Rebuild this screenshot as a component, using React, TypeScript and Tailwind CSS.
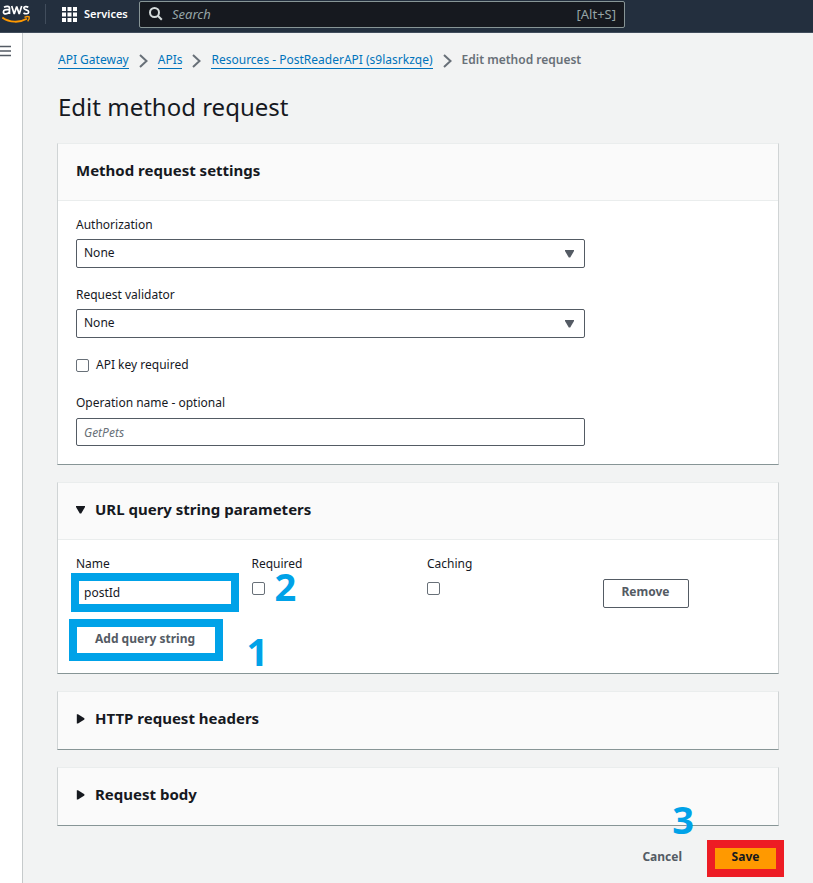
import type { ReactNode } from "react";

const checkbox =
  "block size-[13px] shrink-0 appearance-none rounded-[2px] border border-[#687078] bg-white checked:bg-[#0073bb]";

const annotation =
  "pointer-events-none absolute font-['Open_Sans',sans-serif] text-[38px] leading-[28px] font-bold text-[#00a2e8]";

function Caret({ open, className = "" }: { open: boolean; className?: string }) {
  return (
    <svg viewBox="0 0 10 10" className={`size-[10px] shrink-0 fill-current ${className}`} aria-hidden="true">
      {open ? <path d="M0 1h9v1L5.2 8.6H3.8L0 2z" /> : <path d="M0.8 0.3h1.2l6.4 4v1.2L2 9.6H0.8z" />}
    </svg>
  );
}

function Separator() {
  return (
    <svg viewBox="0 0 9 14" className="mt-[2px] h-[14px] w-[9px] shrink-0" fill="none" stroke="#687078" strokeWidth="2" aria-hidden="true">
      <path d="M1 1l6.5 6-6.5 6" />
    </svg>
  );
}

function Crumb({ children }: { children: ReactNode }) {
  return (
    <a href="#" className="border-b border-[#0073bb] leading-4 text-[#0073bb]">
      {children}
    </a>
  );
}

function Card({ title, open, children }: { title: string; open?: boolean; children?: ReactNode }) {
  return (
    <section className="border border-t-[#eaeded] border-r-[#d0d4d5] border-b-[#879596] border-l-[#d0d4d5] bg-white">
      <header className={`flex h-[57px] items-center bg-[#fafafa] px-[18px] ${children ? "border-b border-[#eaeded] pb-1" : "pb-[6px]"}`}>
        <h2 className="text-[15px] leading-5 font-bold">
          {open === undefined ? (
            title
          ) : (
            <button type="button" aria-expanded={open} className="flex items-center gap-[9px]">
              <Caret open={open} className="mt-[2px]" />
              {title}
            </button>
          )}
        </h2>
      </header>
      {children}
    </section>
  );
}

function SelectField({ id, label }: { id: string; label: string }) {
  return (
    <div>
      <label htmlFor={id} className="block leading-5">
        {label}
      </label>
      <div className="relative mt-1">
        <select id={id} className="block h-[29px] w-full appearance-none rounded-[2px] border border-[#545b64] bg-white px-[7px] pb-[2px]">
          <option>None</option>
        </select>
        <Caret open className="pointer-events-none absolute top-[10px] right-[10px] text-[#545b64]" />
      </div>
    </div>
  );
}

export default function App() {
  return (
    <div className="flex min-h-screen flex-col bg-[#f2f3f3] font-['Noto_Sans',sans-serif] text-[12px] leading-5 text-[#16191f]">
      <header className="flex h-[33px] shrink-0 items-start border-b border-[#414d5c] bg-[#232f3e] text-white">
        <a href="#" aria-label="AWS home" className="ml-[2px] block">
          <svg viewBox="0 0 29 26" className="h-[26px] w-[29px]" fill="none">
            <g stroke="#fff" strokeWidth="1.7">
              <path d="M2 7.2C4.2 6 7.5 5.7 7.5 8.4V14M7.5 9.8C4 9.4 1.4 9.8 1.4 12c0 2.6 4.4 2.4 6.1-.3" />
              <path d="M9.7 6l2.5 8 2.5-7.6L17.2 14 19.7 6" strokeLinejoin="bevel" />
              <path d="M26.3 7.2c-1.4-.8-4.5-.9-4.5.9 0 2.3 4.9 1.3 4.9 3.8 0 2.3-3.5 2.2-5.2 1.1" />
            </g>
            <path d="M.3 17.5c7.2 5.3 17.5 5.4 24.6 1.3" stroke="#ff9900" strokeWidth="1.9" />
            <path d="M22.5 17.3c2-.9 4-.9 4.7-.4.3 1-.3 3.1-1.5 4.5" stroke="#ff9900" strokeWidth="1.4" />
          </svg>
        </a>
        <span className="mt-1 ml-[14px] h-5 w-px bg-[#414d5c]" />
        <button type="button" className="ml-4 flex h-7 w-[63px] items-center gap-[7px] text-[11px] font-semibold">
          <svg viewBox="0 0 15 15" className="size-[15px] shrink-0 fill-white" aria-hidden="true">
            {[0, 5.5, 11].map((y) =>
              [0, 5.5, 11].map((x) => <rect key={`${x}-${y}`} x={x} y={y} width="4" height="4" />),
            )}
          </svg>
          Services
        </button>
        <div className="mt-[1px] ml-[14px] flex h-[27px] w-[486px] items-center rounded-[2px] border border-[#879596] bg-[#16191f] px-2 pb-[2px] text-[13px] text-[#95a5a6]">
          <svg viewBox="0 0 16 16" className="size-4 shrink-0" fill="none" stroke="#d5dbdb" strokeWidth="2" aria-hidden="true">
            <circle cx="6.5" cy="6.5" r="4.5" />
            <path d="M9.8 9.8l4 4" />
          </svg>
          <input type="search" aria-label="Search" placeholder="Search" className="ml-2 min-w-0 flex-1 bg-transparent outline-none placeholder:text-[#95a5a6] placeholder:italic" />
          <span>[Alt+S]</span>
        </div>
      </header>

      <div className="flex flex-1">
        <aside className="w-[23px] shrink-0 border-r border-[#c6cacb] bg-white pt-3">
          <button type="button" aria-label="Open navigation" className="block">
            <svg viewBox="0 0 11 12" className="h-3 w-[11px]" stroke="#545b64" strokeWidth="1.5" aria-hidden="true">
              <path d="M0 1.5h11M0 6h11M0 10.5h11" />
            </svg>
          </button>
        </aside>

        <main className="min-w-0 flex-1 pt-[17px] pr-[34px] pl-[34px]">
          <nav aria-label="Breadcrumbs" className="flex items-center gap-[10px] pl-px">
            <Crumb>API Gateway</Crumb>
            <Separator />
            <Crumb>APIs</Crumb>
            <Separator />
            <Crumb>Resources - PostReaderAPI (s9lasrkzqe)</Crumb>
            <Separator />
            <span className="font-semibold text-[#687078]">Edit method request</span>
          </nav>

          <h1 className="mt-[21px] pl-px text-2xl leading-8">Edit method request</h1>

          <form className="mt-5 flex flex-col gap-[17px]" onSubmit={(event) => event.preventDefault()}>
            <Card title="Method request settings">
              <div className="grid grid-cols-4 gap-[18px] px-[18px] pt-[14px] pb-[18px]">
                <div className="col-span-3">
                  <SelectField id="authorization" label="Authorization" />
                  <div className="mt-[17px]">
                    <SelectField id="validator" label="Request validator" />
                  </div>
                  <label className="mt-[17px] flex items-center gap-[7px]">
                    <input type="checkbox" className={checkbox} />
                    API key required
                  </label>
                  <label htmlFor="operation" className="mt-[18px] block leading-5">
                    Operation name - optional
                  </label>
                  <input id="operation" placeholder="GetPets" className="mt-[5px] block h-7 w-full rounded-[2px] border border-[#545b64] px-[7px] placeholder:text-[#687078] placeholder:italic" />
                </div>
              </div>
            </Card>

            <Card title="URL query string parameters" open>
              <div className="px-[18px] pt-[14px] pb-3">
                <div className="grid grid-cols-4 gap-[18px]">
                  <div>
                    <label htmlFor="param-name" className="block">
                      Name
                    </label>
                    <div className="relative mt-1">
                      <input id="param-name" defaultValue="postId" className="block h-[29px] w-full rounded-[2px] border border-[#545b64] px-[7px]" />
                      <span className="pointer-events-none absolute -inset-x-[5px] -inset-y-[5px] border-8 border-[#00a2e8]" />
                    </div>
                  </div>
                  <div className="relative">
                    <label htmlFor="required" className="block">
                      Required
                    </label>
                    <input id="required" type="checkbox" className={`mt-2 ${checkbox}`} />
                    <span className={`${annotation} top-[18px] left-[23px]`}>2</span>
                    <span className={`${annotation} top-[83px] -left-[5px]`}>1</span>
                  </div>
                  <div>
                    <label htmlFor="caching" className="block">
                      Caching
                    </label>
                    <input id="caching" type="checkbox" className={`mt-2 ${checkbox}`} />
                  </div>
                  <div className="pt-[25px]">
                    <button type="button" className="block h-[29px] rounded-[2px] border border-[#545b64] px-[18px] pb-[3px] font-bold text-[#545b64]">
                      Remove
                    </button>
                  </div>
                </div>
                <button type="button" className="mt-[11px] -ml-[7px] block h-[42px] border-8 border-[#00a2e8] pr-5 pb-[3px] pl-[18px] font-bold text-[#545b64]">
                  Add query string
                </button>
              </div>
            </Card>

            <Card title="HTTP request headers" open={false} />

            <div className="relative">
              <Card title="Request body" open={false} />
              <span className={`${annotation} right-[85px] -bottom-[7px]`}>3</span>
            </div>

            <div className="-mt-[3px] -mr-[5px] flex items-center justify-end gap-[25px] font-bold">
              <button type="button" className="pb-1 text-[#545b64]">
                Cancel
              </button>
              <button type="submit" className="h-[37px] w-[77px] border-8 border-[#ed1c24] bg-[#ff9900] pb-1 leading-4">
                Save
              </button>
            </div>
          </form>
        </main>
      </div>
    </div>
  );
}
